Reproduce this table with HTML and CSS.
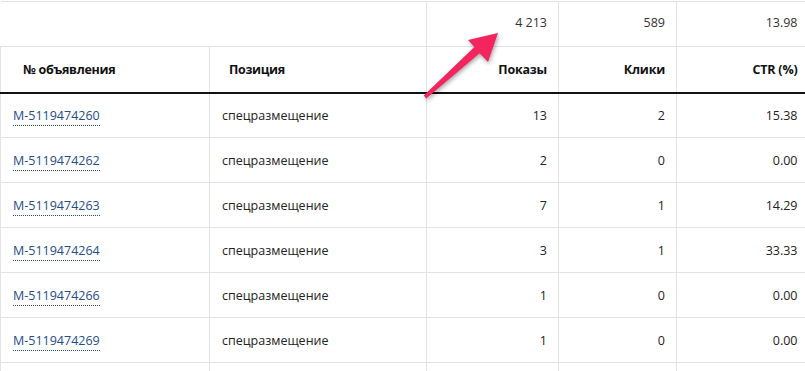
FILE: index.html
```html
<!DOCTYPE html>
<html lang="ru">
<head>
<meta charset="utf-8">
<title>Отчёт</title>
<link rel="stylesheet" href="styles.css">
</head>
<body>
<div class="report">
  <table class="stats">
    <colgroup>
      <col class="c-id"><col class="c-pos"><col class="c-shows"><col class="c-clicks"><col class="c-ctr">
    </colgroup>
    <tr class="totals">
      <td colspan="2" class="blank"></td>
      <td class="num">4 213</td>
      <td class="num">589</td>
      <td class="num last">13.98</td>
    </tr>
    <tr class="head">
      <th class="h-id">№ объявления</th>
      <th class="h-pos">Позиция</th>
      <th class="num">Показы</th>
      <th class="num">Клики</th>
      <th class="num last">CTR (%)</th>
    </tr>
    <tr class="row"><td><a class="ad" href="#">M-5119474260</a></td><td>спецразмещение</td><td class="num">13</td><td class="num">2</td><td class="num last">15.38</td></tr>
    <tr class="row"><td><a class="ad" href="#">M-5119474262</a></td><td>спецразмещение</td><td class="num">2</td><td class="num">0</td><td class="num last">0.00</td></tr>
    <tr class="row"><td><a class="ad" href="#">M-5119474263</a></td><td>спецразмещение</td><td class="num">7</td><td class="num">1</td><td class="num last">14.29</td></tr>
    <tr class="row"><td><a class="ad" href="#">M-5119474264</a></td><td>спецразмещение</td><td class="num">3</td><td class="num">1</td><td class="num last">33.33</td></tr>
    <tr class="row"><td><a class="ad" href="#">M-5119474266</a></td><td>спецразмещение</td><td class="num">1</td><td class="num">0</td><td class="num last">0.00</td></tr>
    <tr class="row"><td><a class="ad" href="#">M-5119474269</a></td><td>спецразмещение</td><td class="num">1</td><td class="num">0</td><td class="num last">0.00</td></tr>
    <tr class="row"><td></td><td></td><td></td><td></td><td></td></tr>
  </table>
  <svg class="arrow" width="805" height="371" viewBox="0 0 805 371" aria-hidden="true">
    <polygon points="498,33 488,62 479.6,53.2 426.2,98.4 423.8,95.6 474.4,47 468,40" fill="#f2255f"/>
  </svg>
</div>
</body>
</html>
```
FILE: styles.css
```css
html, body {
  margin: 0;
  padding: 0;
  background: #fff;
}
body {
  width: 805px;
  height: 371px;
  overflow: hidden;
  font-family: "Open Sans", "Noto Sans", "DejaVu Sans", sans-serif;
  font-size: 12.5px;
  color: #222;
}
.report {
  position: relative;
  padding-top: 1px;
}
.stats {
  width: 805px;
  table-layout: fixed;
  border-collapse: collapse;
}
.c-id { width: 209px; }
.c-pos { width: 217px; }
.c-shows { width: 132px; }
.c-clicks { width: 118px; }
.c-ctr { width: 129px; }

.stats td, .stats th {
  border: 1px solid #e3e3e3;
  padding: 0 11px 0 12px;
  vertical-align: middle;
  white-space: nowrap;
  line-height: 16px;
}
.stats .num { text-align: right; }
.stats .last { padding-right: 8px; border-right: 0; }

.totals { height: 45px; }
.totals td { color: #333; padding-bottom: 3px; }
.totals .blank { border-left: 0; }

.head { height: 46px; }
.head th {
  font-weight: 700;
  color: #111;
  text-align: left;
  border-bottom: 2px solid #111;
  padding-top: 2px;
}
.head .h-id { padding-left: 22px; letter-spacing: -0.3px; }
.head .h-pos { padding-left: 19px; letter-spacing: -0.3px; }
.head th.num { text-align: right; letter-spacing: -0.2px; }

.row { height: 45px; }
.row td { padding-top: 2px; }
.ad {
  color: #244c8a;
  text-decoration: none;
  border-bottom: 1px dotted #244c8a;
  padding-bottom: 1px;
}
.arrow {
  position: absolute;
  left: 0;
  top: 0;
  pointer-events: none;
  filter: drop-shadow(1px 2px 2px rgba(0, 0, 0, 0.35));
}
```
